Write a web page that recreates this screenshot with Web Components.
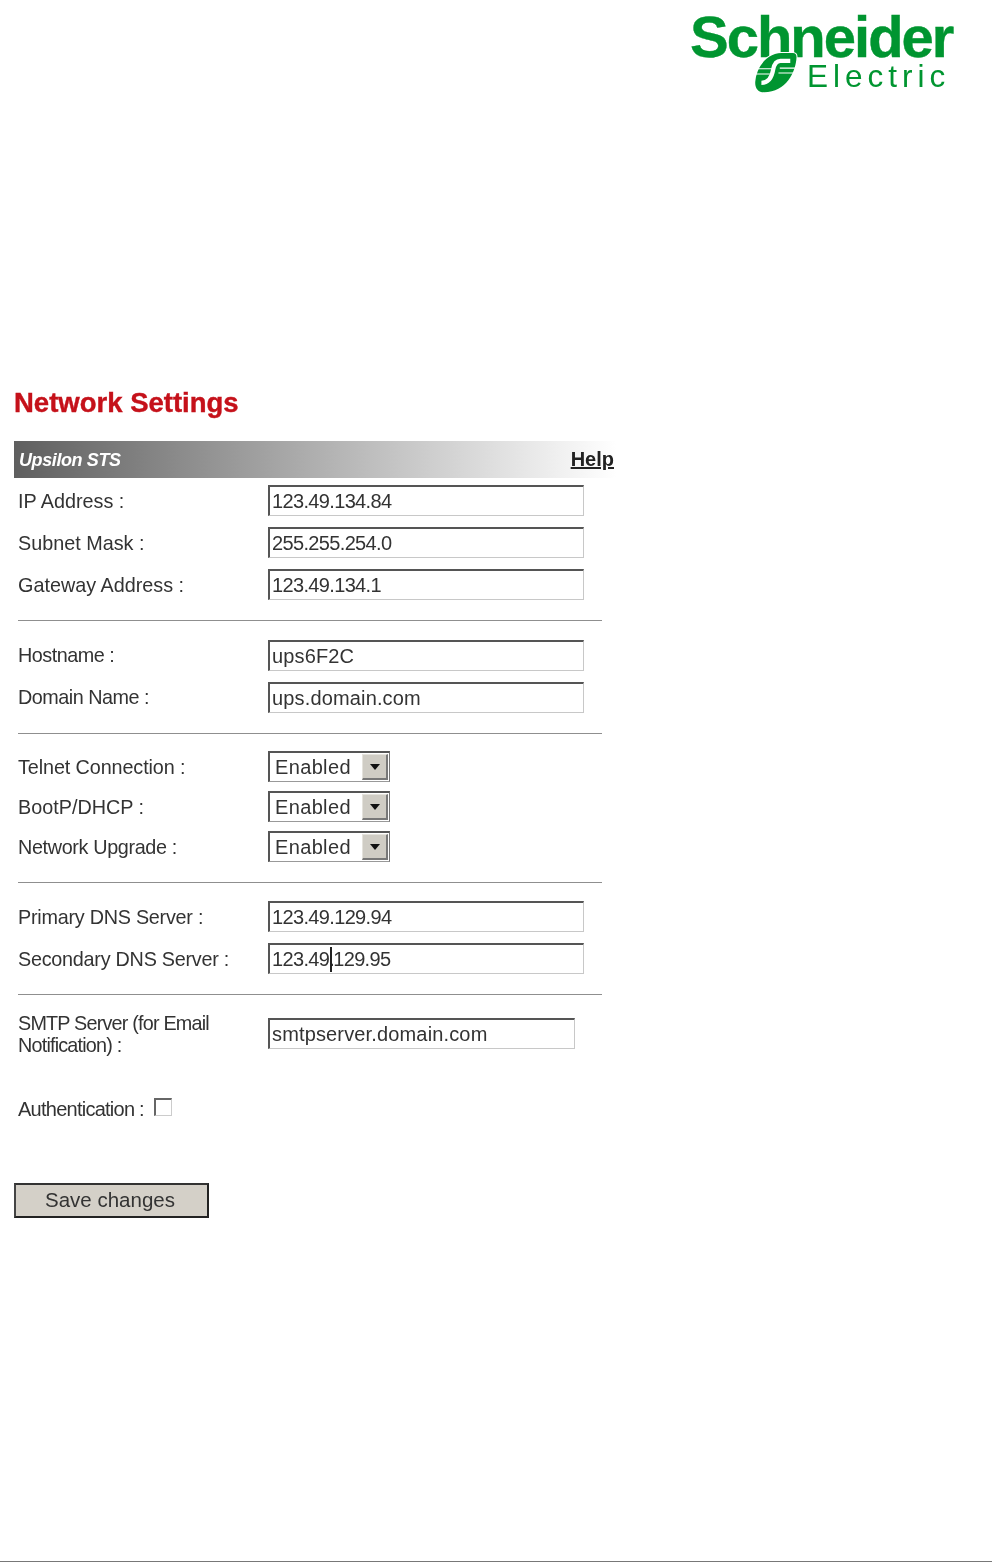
<!DOCTYPE html>
<html>
<head>
<meta charset="utf-8">
<title>Network Settings</title>
<style>
  html, body { margin: 0; padding: 0; background: #fff; }
  body { font-family: "Liberation Sans", Arial, sans-serif; color: #333; }
  #page { height: 1561px; border-bottom: 1px solid #777; display: flex; flex-direction: column; }
</style>
</head>
<body>
<div id="page">
  <se-logo></se-logo>
  <settings-form>
    <form-row low label="IP Address :"><text-field value="123.49.134.84"></text-field></form-row>
    <form-row low label="Subnet Mask :"><text-field value="255.255.254.0"></text-field></form-row>
    <form-row low label="Gateway Address :"><text-field value="123.49.134.1"></text-field></form-row>
    <form-rule></form-rule>
    <form-row squeeze=".5" label="Hostname :"><text-field value="ups6F2C"></text-field></form-row>
    <form-row squeeze=".5" label="Domain Name :"><text-field value="ups.domain.com"></text-field></form-row>
    <form-rule style="margin-bottom:17px"></form-rule>
    <form-row tight low squeeze=".1" label="Telnet Connection :"><select-field value="Enabled"></select-field></form-row>
    <form-row tight low label="BootP/DHCP :"><select-field value="Enabled"></select-field></form-row>
    <form-row tight low squeeze=".35" label="Network Upgrade :"><select-field value="Enabled"></select-field></form-row>
    <form-rule style="margin-top:11px;margin-bottom:18px"></form-rule>
    <form-row low squeeze=".25" label="Primary DNS Server :"><text-field value="123.49.129.94"></text-field></form-row>
    <form-row low squeeze=".25" label="Secondary DNS Server :"><text-field value="123.49.129.95" caret="7"></text-field></form-row>
    <form-rule></form-rule>
    <form-row tall squeeze=".8" label="SMTP Server (for Email Notification) :"><text-field short value="smtpserver.domain.com"></text-field></form-row>
    <auth-row label="Authentication :"></auth-row>
    <save-button>Save changes</save-button>
  </settings-form>
</div>

<script>
class SeLogo extends HTMLElement {
  connectedCallback() {
    this.attachShadow({ mode: 'open' }).innerHTML = `
    <style>
      :host { display: flex; justify-content: flex-end; height: 108px; flex: none; padding-right: 38px; color: #009530; font-family: "Liberation Sans", Arial, sans-serif; }
      .logo { width: 264px; display: flex; flex-direction: column; align-items: flex-start; padding-top: 12px; filter: blur(.4px); }
      .name { font-size: 58px; font-weight: bold; line-height: 50px; letter-spacing: -2px; white-space: nowrap; -webkit-text-stroke: .4px #009530; }
      .sub { display: flex; align-items: flex-start; margin-left: 65px; height: 28px; }
      svg { width: 42px; height: 41px; flex: none; margin-top: -10px; overflow: visible; }
      .elec { font-size: 31.5px; line-height: 28px; letter-spacing: 5px; margin-left: 10px; white-space: nowrap; }
    </style>
    <div class="logo">
      <div class="name">Schneider</div>
      <div class="sub">
        <svg viewBox="225 155 127 125">
          <path fill="#009530" stroke="#fff" stroke-width="6" paint-order="stroke" d="M340 158Q352 158 351 172C349 215 320 278 252 278 232 278 222 262 226 240 232 195 265 158 305 158Z"/>
          <path fill="none" stroke="#fff" stroke-width="13" d="M332 182H302C288 182 283 192 280 208 276 232 266 249 244 249"/>
          <path fill="none" stroke="#fff" stroke-width="3.5" d="M222 206H276M220 222H270M300 204H354M296 219H350"/>
        </svg>
        <div class="elec">Electric</div>
      </div>
    </div>`;
  }
}

class SettingsForm extends HTMLElement {
  connectedCallback() {
    this.attachShadow({ mode: 'open' }).innerHTML = `
    <style>
      :host { display: block; box-sizing: border-box; padding: 278px 0 0 14px; width: 616px; flex: none; color: #333; font-family: "Liberation Sans", Arial, sans-serif; filter: blur(.35px); }
      h1 { margin: 0 0 20px; height: 35px; font-size: 27.5px; line-height: 33px; font-weight: bold; color: #c5111a; white-space: nowrap; -webkit-text-stroke: .4px #c5111a; }
      .bar { height: 37px; display: flex; justify-content: space-between; align-items: center; background: linear-gradient(to right, #5f5f5f, #ffffff); padding: 0 2px 0 5px; margin-bottom: 7px; }
      .bar i { color: #fff; font-size: 18px; font-weight: bold; letter-spacing: -.4px; margin-top: 1px; }
      .bar a { color: #222; font-size: 20px; font-weight: bold; text-decoration: underline; }
    </style>
    <h1>Network Settings</h1>
    <div class="bar"><i>Upsilon STS</i><a href="#">Help</a></div>
    <slot></slot>`;
  }
}

class FormRow extends HTMLElement {
  connectedCallback() {
    const squeeze = this.getAttribute('squeeze') || 0;
    this.attachShadow({ mode: 'open' }).innerHTML = `
    <style>
      :host { display: grid; grid-template-columns: 250px auto; justify-content: start; align-items: center; padding: 0 0 11px 4px; font-size: 19.8px; color: #333; }
      :host([tight]) { padding-bottom: 9px; }
      :host([tall]) { padding-top: 4px; align-items: start; padding-bottom: 0; }
      :host([low]) .lab { margin-top: 2px; }
      .lab { white-space: nowrap; letter-spacing: -${squeeze}px; }
      :host([tall]) .lab { white-space: normal; width: 200px; line-height: 22px; margin-top: -6px; }
    </style>
    <div class="lab">${this.getAttribute('label')}</div>
    <slot></slot>`;
  }
}

class TextField extends HTMLElement {
  connectedCallback() {
    const value = this.getAttribute('value');
    const at = this.getAttribute('caret');
    const body = at ? `${value.slice(0, +at)}<b></b>${value.slice(+at)}` : value;
    // the digits in the shot are narrower than Arial's
    const spacing = /^[\d.]+$/.test(value) ? '-.65px' : '.15px';
    this.attachShadow({ mode: 'open' }).innerHTML = `
    <style>
      :host { display: block; box-sizing: border-box; width: 316px; height: 31px; background: #fff; border-style: solid; border-width: 2px 1px 1px 2px; border-color: #555 #c8c8c8 #c8c8c8 #555; padding-left: 2px; font-size: 20px; line-height: 28px; color: #333; letter-spacing: ${spacing}; white-space: nowrap; overflow: hidden; }
      :host([short]) { width: 307px; }
      b { display: inline-block; width: 2px; height: 25px; background: #222; vertical-align: -6px; margin: 0 1px 0 -4px; }
    </style>${body}`;
  }
}

class SelectField extends HTMLElement {
  connectedCallback() {
    this.attachShadow({ mode: 'open' }).innerHTML = `
    <style>
      :host { display: flex; box-sizing: border-box; width: 122px; height: 31px; background: #fff; border-style: solid; border-width: 2px 1px 1px 2px; border-color: #555 #777 #999 #555; font-size: 20px; color: #333; letter-spacing: .35px; }
      span { flex: 1; padding-left: 5px; line-height: 29px; }
      .btn { width: 26px; margin: 1px 1px 1px 0; box-sizing: border-box; background: #cfccc4; border-style: solid; border-width: 1px 2px 2px 1px; border-color: #e4e2dc #777 #777 #e4e2dc; display: flex; align-items: center; justify-content: center; }
      .btn::after { content: ""; border: 5.5px solid transparent; border-top: 6px solid #111; border-bottom: 0; }
    </style>
    <span>${this.getAttribute('value')}</span><div class="btn"></div>`;
  }
}

class FormRule extends HTMLElement {
  connectedCallback() {
    this.attachShadow({ mode: 'open' }).innerHTML = `
    <style>
      :host { display: block; height: 1px; background: #8f8f8f; margin: 9px 14px 19px 4px; }
    </style>`;
  }
}

class AuthRow extends HTMLElement {
  connectedCallback() {
    this.attachShadow({ mode: 'open' }).innerHTML = `
    <style>
      :host { display: flex; align-items: center; margin: 33px 0 0 4px; height: 40px; font-size: 20px; color: #333; }
      span { width: 136px; flex: none; white-space: nowrap; letter-spacing: -.75px; }
      i { display: block; box-sizing: border-box; width: 18px; height: 18px; margin-top: -4px; background: #fff; border-style: solid; border-width: 2px 1px 1px 2px; border-color: #666 #ccc #ccc #666; }
    </style>
    <span>${this.getAttribute('label')}</span><i></i>`;
  }
}

class SaveButton extends HTMLElement {
  connectedCallback() {
    this.attachShadow({ mode: 'open' }).innerHTML = `
    <style>
      :host { display: block; box-sizing: border-box; width: 195px; height: 35px; margin-top: 54px; padding-right: 3px; background: #d4d0c8; border: 2px solid #222; border-top-color: #333; border-left-color: #444; text-align: center; font-size: 20.5px; line-height: 30px; color: #333; }
    </style>
    <slot></slot>`;
  }
}

customElements.define('se-logo', SeLogo);
customElements.define('settings-form', SettingsForm);
customElements.define('form-row', FormRow);
customElements.define('text-field', TextField);
customElements.define('select-field', SelectField);
customElements.define('form-rule', FormRule);
customElements.define('auth-row', AuthRow);
customElements.define('save-button', SaveButton);
</script>
</body>
</html>
